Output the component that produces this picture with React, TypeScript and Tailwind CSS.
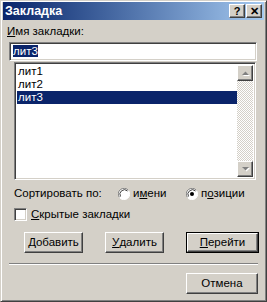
import React from "react";

const font = "font-['Liberation_Sans',Arial,sans-serif] text-[11.5px] leading-[13px] text-black";
const raised =
  "border border-t-white border-l-white border-r-[#404040] border-b-[#404040] shadow-[inset_-1px_-1px_#808080]";
const sunken =
  "border border-t-[#808080] border-l-[#808080] border-r-white border-b-white shadow-[inset_1px_1px_#404040,inset_-1px_-1px_#d4d0c8]";

function TitleButton({ children }: { children: React.ReactNode }) {
  return (
    <div
      className={`${raised} w-[16px] h-[14px] bg-[#d4d0c8] flex items-center justify-center font-['Liberation_Sans',Arial,sans-serif] text-[11px] font-bold text-black leading-none`}
    >
      {children}
    </div>
  );
}

function Arrow({ up }: { up?: boolean }) {
  return (
    <div className={`${raised} w-[16px] h-[16px] bg-[#d4d0c8] flex items-center justify-center`}>
      <svg width="9" height="6" viewBox="0 0 9 6">
        {up ? (
          <>
            <path d="M1 5h7L4.5 1.5z" fill="#fff" transform="translate(1 1)" />
            <path d="M1 5h7L4.5 1.5z" fill="#808080" />
          </>
        ) : (
          <>
            <path d="M1 1h7L4.5 4.5z" fill="#fff" transform="translate(1 1)" />
            <path d="M1 1h7L4.5 4.5z" fill="#808080" />
          </>
        )}
      </svg>
    </div>
  );
}

function Radio({ checked }: { checked?: boolean }) {
  return (
    <svg width="12" height="12" viewBox="0 0 12 12">
      <circle cx="6" cy="6" r="5.5" fill="#fff" />
      <path d="M10.5 2.5A5.5 5.5 0 0 0 1.5 9.5" stroke="#808080" strokeWidth="1" fill="none" />
      <path d="M9.5 3A4.5 4.5 0 0 0 2.5 8.5" stroke="#404040" strokeWidth="1" fill="none" />
      <path d="M1.5 9.5A5.5 5.5 0 0 0 10.5 2.5" stroke="#fff" strokeWidth="1" fill="none" />
      {checked && <circle cx="6" cy="6" r="2" fill="#000" />}
    </svg>
  );
}

function Button({
  children,
  width,
  isDefault,
}: {
  children: React.ReactNode;
  width: string;
  isDefault?: boolean;
}) {
  const inner = (
    <div className={`${raised} h-full w-full bg-[#d4d0c8] flex items-center justify-center`}>
      {children}
    </div>
  );
  if (isDefault) {
    return <div className={`${width} h-[21px] border border-black`}>{inner}</div>;
  }
  return <div className={`${width} h-[21px]`}>{inner}</div>;
}

export default function App() {
  return (
    <div
      className={`${font} w-[267px] h-[302px] bg-[#d4d0c8] border border-t-[#d4d0c8] border-l-[#d4d0c8] border-r-[#404040] border-b-[#404040] shadow-[inset_1px_1px_#fff,inset_-1px_-1px_#808080] pt-[1px] px-[2px] pb-[2px] flex flex-col`}
    >
      {/* title bar */}
      <div className="h-[18px] bg-gradient-to-r from-[#0a246a] to-[#a6caf0] flex items-center pl-[2px] pr-[2px]">
        <span className="text-white font-bold text-[12.5px] grow">Закладка</span>
        <div className="flex">
          <TitleButton>?</TitleButton>
          <div className="w-[1px]" />
          <TitleButton>✕</TitleButton>
        </div>
      </div>

      <div className="ml-[4px] mt-[5px] h-[13px]">
        <span className="underline">И</span>мя закладки:
      </div>

      <div className={`${sunken} ml-[6px] mt-[4px] w-[248px] h-[19px] bg-white pl-[3px] pt-[2px]`}>
        <span className="bg-[#0a246a] text-white">лит3</span>
      </div>

      {/* list */}
      <div className={`${sunken} ml-[11px] mt-[1px] w-[242px] h-[118px] bg-white flex p-[2px]`}>
        <div className="grow flex flex-col">
          <div className="h-[13px] pl-[1px]">лит1</div>
          <div className="h-[13px] pl-[1px]">лит2</div>
          <div className="h-[13px] pl-[1px] bg-[#0a246a] text-white">лит3</div>
        </div>
        <div className="w-[16px] flex flex-col bg-[repeating-conic-gradient(#fff_0%_25%,#d4d0c8_0%_50%)] bg-[length:2px_2px]">
          <Arrow up />
          <div className="grow" />
          <Arrow />
        </div>
      </div>

      {/* sort */}
      <div className="ml-[11px] mt-[7px] h-[13px] flex items-center">
        <span className="w-[104px]">Сортировать по:</span>
        <Radio />
        <span className="ml-[3px] w-[53px]">
          и<span className="underline">м</span>ени
        </span>
        <Radio checked />
        <span className="ml-[3px]">
          п<span className="underline">о</span>зиции
        </span>
      </div>

      {/* checkbox */}
      <div className="ml-[11px] mt-[8px] h-[13px] flex items-center">
        <div className={`${sunken} w-[13px] h-[13px] bg-white`} />
        <span className="ml-[4px]">
          <span className="underline">С</span>крытые закладки
        </span>
      </div>

      {/* buttons */}
      <div className="mt-[11px] flex">
        <div className="ml-[21px]">
          <Button width="w-[59px]">
            <span className="underline">Д</span>обавить
          </Button>
        </div>
        <div className="ml-[22px]">
          <Button width="w-[59px]">
            <span className="underline">У</span>далить
          </Button>
        </div>
        <div className="ml-[22px]">
          <Button width="w-[73px]" isDefault>
            <span className="underline">П</span>ерейти
          </Button>
        </div>
      </div>

      <div className="ml-[6px] mt-[10px] w-[249px] h-[2px] border-t border-t-[#808080] border-b border-b-white" />

      <div className="mt-[8px] ml-[183px]">
        <Button width="w-[72px]">Отмена</Button>
      </div>
    </div>
  );
}
